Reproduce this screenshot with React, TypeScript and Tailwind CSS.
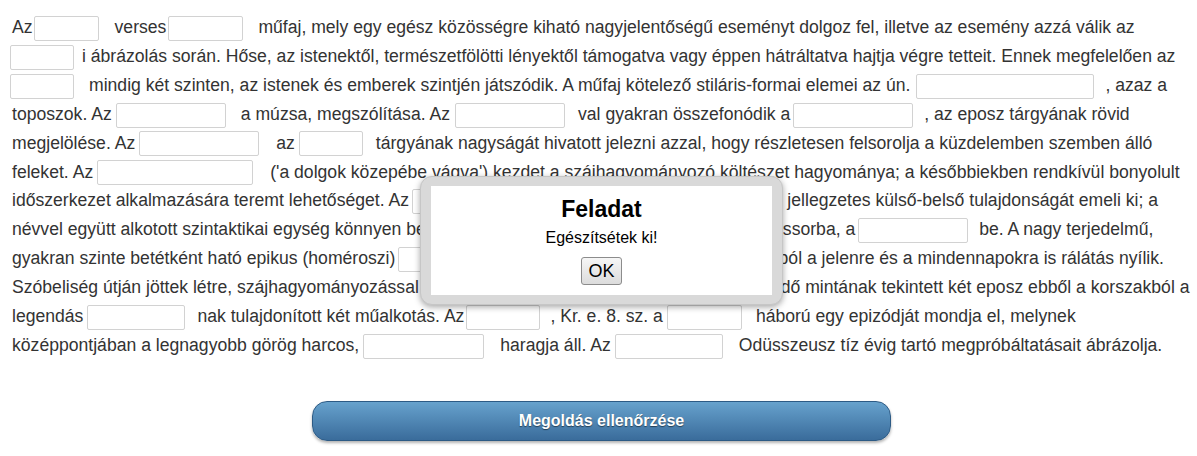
type Blank = { cls: string };
type Tok = string | Blank;

const b = (cls: string): Blank => ({ cls });

const lines: Tok[][] = [
  [
    "Az",
    b("w-[65px] ml-[1px] mr-[16px]"),
    "verses",
    b("w-[75px] ml-[2px] mr-[15px]"),
    "műfaj, mely egy egész közösségre kiható nagyjelentőségű eseményt dolgoz fel, illetve az esemény azzá válik az",
  ],
  [
    b("w-[64px] ml-[-2px] mr-[8px]"),
    "i ábrázolás során. Hőse, az istenektől, természetfölötti lényektől támogatva vagy éppen hátráltatva hajtja végre tetteit. Ennek megfelelően az",
  ],
  [
    b("w-[64px] ml-[-2px] mr-[15px]"),
    "mindig két szinten, az istenek és emberek szintjén játszódik. A műfaj kötelező stiláris-formai elemei az ún.",
    b("w-[178px] ml-[6px] mr-[11px]"),
    ", azaz a",
  ],
  [
    "toposzok. Az",
    b("w-[110px] ml-[4px] mr-[15px]"),
    "a múzsa, megszólítása. Az",
    b("w-[110px] ml-[5px] mr-[13px]"),
    "val gyakran összefonódik a",
    b("w-[120px] ml-[3px] mr-[11px]"),
    ", az eposz tárgyának rövid",
  ],
  [
    "megjelölése. Az",
    b("w-[120px] ml-[4px] mr-[17px]"),
    "az",
    b("w-[64px] ml-[4px] mr-[13px]"),
    "tárgyának nagyságát hivatott jelezni azzal, hogy részletesen felsorolja a küzdelemben szemben álló",
  ],
  [
    "feleket. Az",
    b("w-[156px] ml-[4px] mr-[17px]"),
    "('a dolgok közepébe vágva') kezdet a szájhagyományozó költészet hagyománya; a későbbiekben rendkívül bonyolult",
  ],
  [
    "időszerkezet alkalmazására teremt lehetőséget. Az",
    b("w-[113px] ml-[3px] mr-[12px]"),
    "k a szereplők, tárgyak valamely jellegzetes külső-belső tulajdonságát emeli ki; a",
  ],
  [
    "névvel együtt alkotott szintaktikai egység könnyen beilleszthető az",
    b("w-[216px] ml-[3px] mr-[12px]"),
    "verssorba, a",
    b("w-[110px] ml-[3px] mr-[11px]"),
    "be. A nagy terjedelmű,",
  ],
  [
    "gyakran szinte betétként ható epikus (homéroszi)",
    b("w-[157px] ml-[3px] mr-[12px]"),
    "okban a távoli, mitikus múltból a jelenre és a mindennapokra is rálátás nyílik.",
  ],
  [
    "Szóbeliség útján jöttek létre, szájhagyományozással terjedtek. Az európai kultúra számára követendő mintának tekintett két eposz ebből a korszakból a",
  ],
  [
    "legendás",
    b("w-[98px] ml-[4px] mr-[12px]"),
    "nak tulajdonított két műalkotás. Az",
    b("w-[74px] ml-[2px] mr-[10px]"),
    ", Kr. e. 8. sz. a",
    b("w-[75px] ml-[4px] mr-[14px]"),
    "háború egy epizódját mondja el, melynek",
  ],
  [
    "középpontjában a legnagyobb görög harcos,",
    b("w-[121px] ml-[4px] mr-[16px]"),
    "haragja áll. Az",
    b("w-[108px] ml-[4px] mr-[16px]"),
    "Odüsszeusz tíz évig tartó megpróbáltatásait ábrázolja.",
  ],
];

export default function App() {
  return (
    <div className="relative w-full min-h-[456px] bg-white font-['Liberation_Sans',Arial,sans-serif] text-[#333]">
      {/* gap-fill text */}
      <div className="px-[12px] pt-[13px] text-[17.6px] leading-[28.9px]">
        {lines.map((line, i) => (
          <div key={i} className="whitespace-nowrap">
            {line.map((tok, j) =>
              typeof tok === "string" ? (
                <span key={j}>{tok}</span>
              ) : (
                <input
                  key={j}
                  type="text"
                  className={
                    "inline-block h-[25px] align-middle bg-white border border-[#d2d2d2] rounded-[2px] outline-none " +
                    tok.cls
                  }
                />
              )
            )}
          </div>
        ))}
      </div>

      {/* check button */}
      <div className="flex justify-center pl-[6px] mt-[41px]">
        <button className="w-[579px] h-[40px] rounded-[15px] border border-[#2d5b85] bg-gradient-to-b from-[#67a2cd] to-[#3a6c9b] shadow-[0_2px_3px_rgba(0,0,0,0.3)] text-white font-bold text-[16px] [text-shadow:0_1px_1px_rgba(0,0,0,0.5)]">
          Megoldás ellenőrzése
        </button>
      </div>

      {/* alert dialog */}
      <div className="absolute left-[420px] top-[176px] w-[363px] rounded-[12px] border border-[#c6c6c6] bg-[#d9d9d9] px-[10px] py-[9px] shadow-[0_2px_6px_rgba(0,0,0,0.35)]">
        <div className="flex flex-col items-center bg-white pt-[10px] pb-[10px] text-black">
          <h2 className="text-[23px] leading-[26px] font-bold">Feladat</h2>
          <p className="mt-[7px] text-[16px] leading-[18px]">Egészítsétek ki!</p>
          <button className="mt-[10px] h-[28px] min-h-[28px] px-[6px] rounded-[3px] border border-[#8c8c8c] bg-gradient-to-b from-[#f6f6f6] to-[#dcdcdc] text-[18px] leading-[26px]">
            OK
          </button>
        </div>
      </div>
    </div>
  );
}
